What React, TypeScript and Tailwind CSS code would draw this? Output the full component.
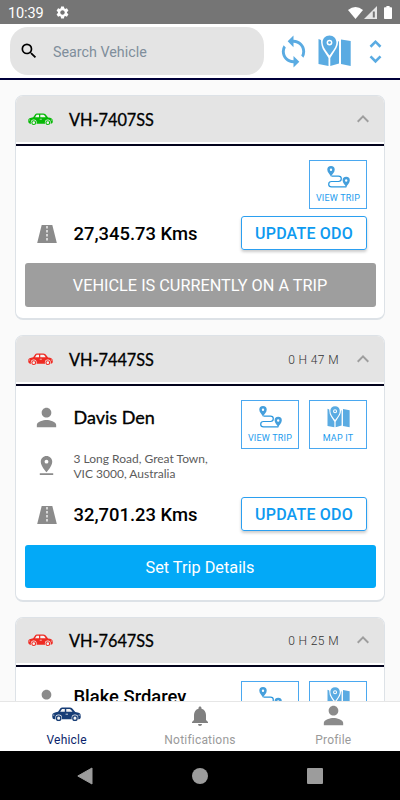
import React from "react";
import {
  MdKeyboardArrowUp,
  MdNotifications,
  MdPerson,
  MdPinDrop,
  MdSearch,
  MdSettings,
  MdSync,
  MdUnfoldMore,
} from "react-icons/md";

type Vehicle = {
  rego: string;
  carColor: string;
  time?: string;
  driver?: string;
  driverFont?: string;
  address?: string[];
  odo: string;
  onTrip?: boolean;
};

const vehicles: Vehicle[] = [
  { rego: "VH-7407SS", carColor: "text-[#06b806]", odo: "27,345.73 Kms", onTrip: true },
  {
    rego: "VH-7447SS",
    carColor: "text-[#ee2a22]",
    time: "0 H 47 M",
    driver: "Davis Den",
    driverFont: "font-[Lato] text-[18px] [-webkit-text-stroke:0.35px_#000]",
    address: ["3 Long Road, Great Town,", "VIC 3000, Australia"],
    odo: "32,701.23 Kms",
  },
  {
    rego: "VH-7647SS",
    carColor: "text-[#ee2a22]",
    time: "0 H 25 M",
    driver: "Blake Srdarey",
    driverFont: "font-[Roboto] font-medium text-[18.4px] pb-[4px]",
    odo: "18,220.40 Kms",
  },
];

const CarIcon = ({ className }: { className?: string }) => (
  <svg viewBox="0 0 48 24" className={className} fill="none">
    <path
      d="M3 9.5Q6 8 10 7.5L14 1.8Q15 .5 17 .5H29Q32 .5 34 2.5L38.5 8Q47.5 9 47.5 13V17.5Q47 20 44 20H4Q.5 19.5 .5 16V12.5Q.5 10.5 3 9.5Z"
      fill="currentColor"
    />
    <path d="M13.5 7.5L16.5 3H21.2V7.5ZM23.6 3H29.5Q31 3 34 7.5H23.6Z" fill="#f4f4f4" />
    <path d="M22.5 11.5H26.5" stroke="#f4f4f4" strokeWidth="1.3" />
    <path d="M1.5 13H4M44 13H47" stroke="#f4f4f4" strokeWidth="1.2" />
    <circle cx="11" cy="17.8" r="5.6" fill="#f4f4f4" />
    <circle cx="38" cy="17.8" r="5.6" fill="#f4f4f4" />
    <circle cx="11" cy="18" r="3.6" stroke="currentColor" strokeWidth="2.2" />
    <circle cx="38" cy="18" r="3.6" stroke="currentColor" strokeWidth="2.2" />
  </svg>
);

const MapIcon = ({ className }: { className?: string }) => (
  <svg viewBox="0 0 33 32" className={className} fill="#5aabe2">
    <path d="M0.5 4L3 5Q3 12 6 16L10.5 23V31L0.5 29Z" />
    <path d="M12.3 23L18.5 13Q20 10 20.3 6L21 6.5V28.5L12.3 31Z" />
    <path d="M23 4.5L32.7 6V31L23 29Z" />
    <path
      fillRule="evenodd"
      d="M11.5 0.5C7.4 0.5 4.6 3.5 4.6 7.3C4.6 12 8.5 16.5 11.5 20.5C14.5 16.5 18.4 12 18.4 7.3C18.4 3.5 15.6 0.5 11.5 0.5ZM11.5 4.7A2.9 2.9 0 1 1 11.5 10.5A2.9 2.9 0 1 1 11.5 4.7Z"
    />
    <circle cx="11.5" cy="7.6" r="1.4" />
  </svg>
);

const TripIcon = ({ className }: { className?: string }) => (
  <svg viewBox="0 0 23 22" className={className} fill="none">
    <path
      d="M4.5 10.2H11.5Q14.3 10.2 14.3 12.8Q14.3 15.5 11.5 15.5H4.5Q1.7 15.5 1.7 18.2Q1.7 20.9 4.5 20.9H19.2"
      stroke="#2b97de"
      strokeWidth="1.2"
    />
    <path
      fill="#459fdc"
      fillRule="evenodd"
      d="M4 0A3.7 3.7 0 0 0 .3 3.8C.3 6.6 3 8.2 4 10.8C5 8.2 7.7 6.6 7.7 3.8A3.7 3.7 0 0 0 4 0ZM4 2.6A1.2 1.2 0 1 1 4 5A1.2 1.2 0 1 1 4 2.6Z"
    />
    <path
      fill="#459fdc"
      fillRule="evenodd"
      d="M19.2 10.8A3.6 3.6 0 0 0 15.6 14.5C15.6 17.2 18.2 18.8 19.2 21.4C20.2 18.8 22.8 17.2 22.8 14.5A3.6 3.6 0 0 0 19.2 10.8ZM19.2 13.3A1.2 1.2 0 1 1 19.2 15.7A1.2 1.2 0 1 1 19.2 13.3Z"
    />
  </svg>
);

const RoadIcon = () => (
  <svg viewBox="0 0 20 18" className="mt-[3px] h-[18px] w-5">
    <path d="M4.7 0H15.3L19.8 18H0.2Z" fill="#8b8b8b" />
    <path d="M10 1V17" stroke="#fff" strokeWidth="1.3" strokeDasharray="2.4 1.6" />
  </svg>
);

const StatusBar = () => (
  <div className="flex h-6 shrink-0 items-center bg-[#757575] pl-2 pr-[7px] text-white">
    <span className="w-[47px] pt-[3px] text-[14.5px] tracking-[-0.1px]">10:39</span>
    <MdSettings className="mt-[1px] size-[15px]" />
    <div className="ml-auto flex items-center pt-[1px]">
      <svg viewBox="0 0 15 12" className="h-3 w-[15px]">
        <path d="M0 3Q7.5 -3 15 3L7.5 12Z" fill="#fff" />
      </svg>
      <svg viewBox="0 0 13 13" className="ml-[1px] h-[13px] w-[13px]">
        <path d="M0 13L13 0V13Z" fill="#e6e6e6" />
        <path d="M8.8 5.5H10.8V11.5H8.8Z" fill="#757575" />
      </svg>
      <svg viewBox="0 0 8 13" className="ml-[7px] mr-[1px] h-[13px] w-2">
        <path d="M2.4 0H5.6V1.3H7.2Q8 1.3 8 2.1V12.2Q8 13 7.2 13H.8Q0 13 0 12.2V2.1Q0 1.3 .8 1.3H2.4Z" fill="#fff" />
      </svg>
    </div>
  </div>
);

const Header = () => (
  <div className="flex h-[56px] shrink-0 items-start border-b-[2px] border-[#00003a] bg-white pl-[10px] pt-[3px]">
    <div className="flex h-12 w-[254px] items-center rounded-[18px] bg-[#e4e4e4] pl-[9px]">
      <MdSearch className="size-5 text-black" />
      <span className="ml-[14px] pt-[3px] text-[14.3px] text-[#7f8e9b]">Search Vehicle</span>
    </div>
    <div className="flex h-12 items-center">
      <MdSync className="ml-[12px] size-[35px] text-[#5aabe2]" />
      <MapIcon className="ml-[7px] h-8 w-[33px]" />
      <MdUnfoldMore className="ml-[9px] size-[31px] text-[#5aabe2]" />
    </div>
  </div>
);

const IconBox = ({ label, children }: { label: string; children: React.ReactNode }) => (
  <button className="flex h-[49px] w-[58px] flex-col items-center border border-[#4aa8f0] pt-[5px]">
    {children}
    <span className="mt-[3px] whitespace-nowrap text-[9px] leading-[14px] tracking-[0.2px] text-[#1c9cee]">
      {label}
    </span>
  </button>
);

const VehicleCard = ({ vehicle }: { vehicle: Vehicle }) => (
  <div className="shrink-0 overflow-hidden rounded-[8px] border border-b-2 border-[#dde2e7] bg-white">
    <div className="flex h-[45.5px] items-center bg-[#e4e4e4] pl-3 pr-[9px]">
      <CarIcon className={`mt-[1px] h-[13px] w-[25px] ${vehicle.carColor}`} />
      <span className="ml-4 pt-[2px] font-[Lato] text-[16.3px] text-black [-webkit-text-stroke:0.3px_#000]">
        {vehicle.rego}
      </span>
      {vehicle.time && (
        <span className="ml-auto pt-[2px] text-[12px] font-light tracking-[0.4px] text-[#333]">
          {vehicle.time}
        </span>
      )}
      <MdKeyboardArrowUp className={`size-6 text-[#9e9e9e] ${vehicle.time ? "ml-3" : "ml-auto"}`} />
    </div>
    <div className="mt-[2px] h-[2px] bg-[#03031c]" />

    <div className="px-[8.5px] pb-[11.5px] pt-[14px]">
      <div className="flex pl-3 pr-[8.5px]">
        {vehicle.driver && (
          <div>
            <div className="flex h-[36px] items-center">
              <MdPerson className="-ml-[5px] size-[29px] text-[#8b8b8b]" />
              <span className={`ml-[13px] whitespace-nowrap text-black ${vehicle.driverFont}`}>
                {vehicle.driver}
              </span>
            </div>
            <div className="mt-[16px] flex h-[30px] items-center">
              {vehicle.address && (
                <>
                  <MdPinDrop className="-ml-[2px] mb-[3px] size-[23px] text-[#8b8b8b]" />
                  <div className="ml-4 font-[Lato] text-[12px] leading-[14.5px] text-[#5c5c5c]">
                    {vehicle.address.map((line) => (
                      <div key={line}>{line}</div>
                    ))}
                  </div>
                </>
              )}
            </div>
          </div>
        )}
        <div className="ml-auto flex gap-[10px]">
          <IconBox label="VIEW TRIP">
            <TripIcon className="h-[22px] w-[23px]" />
          </IconBox>
          {!vehicle.onTrip && (
            <IconBox label="MAP IT">
              <MapIcon className="h-[22px] w-[23px]" />
            </IconBox>
          )}
        </div>
      </div>

      <div className={`flex h-[34px] items-center pl-3 pr-[8.5px] ${vehicle.onTrip ? "mt-[7px]" : "mt-[15px]"}`}>
        <RoadIcon />
        <span className="ml-[17px] pt-[3px] text-[18.4px] font-medium text-black">{vehicle.odo}</span>
        <button className="ml-auto h-[34px] w-[126px] rounded-[3px] border border-[#2b9ff0] pt-[2px] text-[16px] font-medium tracking-[0.2px] text-[#0d9af0] shadow-[0_2px_3px_rgba(0,0,0,0.2)]">
          UPDATE ODO
        </button>
      </div>

      {vehicle.onTrip ? (
        <div className="mt-[13.5px] flex h-[43.5px] items-center justify-center rounded-[3px] bg-[#9e9e9e] pt-[3px] text-[16.3px] text-white">
          VEHICLE IS CURRENTLY ON A TRIP
        </div>
      ) : (
        <button className="mt-[14px] flex h-[43.5px] w-full items-center justify-center rounded-[3px] bg-[#03a9f7] pt-[3px] text-[16.3px] text-white">
          Set Trip Details
        </button>
      )}
    </div>
  </div>
);

const TabBar = () => (
  <div className="grid h-[50px] shrink-0 grid-cols-3 border-t border-[#e6e6e6] bg-white text-[12px] tracking-[0.2px] text-[#9a9a9a]">
    <div className="flex flex-col items-center pt-[5px] text-[#173d76]">
      <CarIcon className="h-[15px] w-[29px]" />
      <span className="mt-[9px] leading-[18px] text-[#0b1f6b]">Vehicle</span>
    </div>
    <div className="flex flex-col items-center pt-[2px]">
      <MdNotifications className="size-6 text-[#808080]" />
      <span className="mt-[3px] leading-[18px]">Notifications</span>
    </div>
    <div className="flex flex-col items-center">
      <MdPerson className="-mt-[1px] size-[29px] text-[#8b8b8b]" />
      <span className="mt-[1px] leading-[18px]">Profile</span>
    </div>
  </div>
);

const SystemNav = () => (
  <div className="flex h-[49px] shrink-0 justify-center bg-black">
    <div className="grid w-[346px] grid-cols-3 place-items-center">
      <svg viewBox="0 0 16 18" className="h-[18px] w-4">
        <path d="M.8 9L15 1V17Z" fill="#9c9c9c" stroke="#9c9c9c" strokeLinejoin="round" />
      </svg>
      <div className="size-4 rounded-full bg-[#9c9c9c]" />
      <div className="size-4 rounded-[1px] bg-[#9c9c9c]" />
    </div>
  </div>
);

const App = () => {
  return (
    <div className="flex h-[800px] w-[400px] flex-col overflow-hidden bg-[#fafafa] font-[Roboto,sans-serif]">
      <StatusBar />
      <Header />
      <div className="flex min-h-0 flex-1 flex-col gap-[15px] overflow-hidden px-[15px] pt-[15px]">
        {vehicles.map((vehicle) => (
          <VehicleCard key={vehicle.rego} vehicle={vehicle} />
        ))}
      </div>
      <TabBar />
      <SystemNav />
    </div>
  );
};

export default App;
